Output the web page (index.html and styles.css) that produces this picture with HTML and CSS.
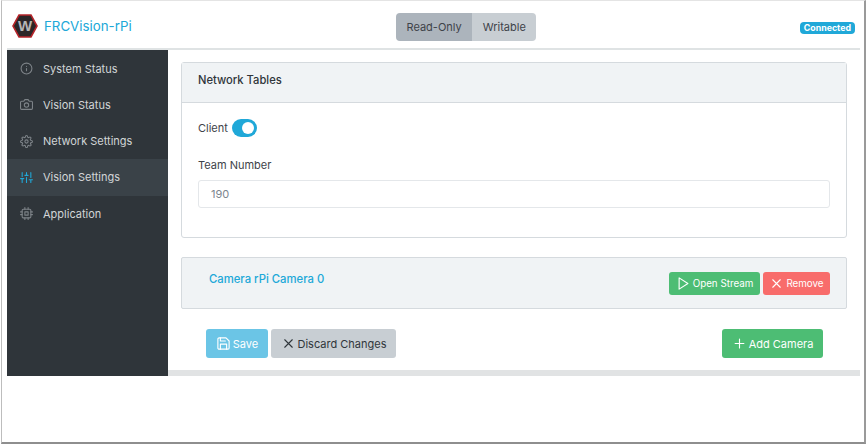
FILE: index.html
```html
<!DOCTYPE html>
<html lang="en">
<head>
<meta charset="utf-8">
<title>FRCVision-rPi</title>
<link rel="stylesheet" href="styles.css">
</head>
<body>
<div class="window">
  <div class="app">
    <header class="topbar">
      <div class="brand">
        <svg class="logo" viewBox="0 0 26 24" width="26" height="24"><polygon points="7,1 19,1 25,12 19,23 7,23 1,12" fill="#2b2627" stroke="#b5242a" stroke-width="1.6"/><text x="13" y="17" text-anchor="middle" class="logo-w">W</text></svg>
        <span class="brand-name">FRCVision-rPi</span>
      </div>
      <div class="toggle-group">
        <span class="toggle active">Read-Only</span><span class="toggle">Writable</span>
      </div>
      <span class="badge">Connected</span>
    </header>
    <div class="layout">
      <nav class="sidebar">
        <a class="nav-item"><svg class="nav-icon" viewBox="0 0 24 24"><circle cx="12" cy="12" r="10"/><path d="M12 16v-4M12 8h.01"/></svg>System Status</a>
        <a class="nav-item"><svg class="nav-icon" viewBox="0 0 24 24"><path d="M23 19a2 2 0 0 1-2 2H3a2 2 0 0 1-2-2V8a2 2 0 0 1 2-2h4l2-3h6l2 3h4a2 2 0 0 1 2 2z"/><circle cx="12" cy="13" r="4"/></svg>Vision Status</a>
        <a class="nav-item"><svg class="nav-icon" viewBox="0 0 24 24"><circle cx="12" cy="12" r="3"/><path d="M19.4 15a1.65 1.65 0 0 0 .33 1.82l.06.06a2 2 0 1 1-2.83 2.83l-.06-.06a1.65 1.65 0 0 0-2.82 1.17V21a2 2 0 1 1-4 0v-.09A1.65 1.65 0 0 0 7.2 19.7l-.06.06a2 2 0 1 1-2.83-2.83l.06-.06A1.65 1.65 0 0 0 3.2 14H3a2 2 0 1 1 0-4h.09A1.65 1.65 0 0 0 4.3 7.2l-.06-.06a2 2 0 1 1 2.83-2.83l.06.06A1.65 1.65 0 0 0 10 3.2V3a2 2 0 1 1 4 0v.09a1.65 1.65 0 0 0 2.8 1.21l.06-.06a2 2 0 1 1 2.83 2.83l-.06.06A1.65 1.65 0 0 0 20.8 10H21a2 2 0 1 1 0 4h-.09a1.65 1.65 0 0 0-1.51 1z"/></svg>Network Settings</a>
        <a class="nav-item current"><svg class="nav-icon" viewBox="0 0 24 24"><path d="M4 21v-7M4 10V3M12 21v-9M12 8V3M20 21v-5M20 12V3M1 14h6M9 8h6M17 16h6"/></svg>Vision Settings</a>
        <a class="nav-item"><svg class="nav-icon" viewBox="0 0 24 24"><rect x="4" y="4" width="16" height="16" rx="2"/><rect x="9" y="9" width="6" height="6"/><path d="M9 1v3M15 1v3M9 20v3M15 20v3M20 9h3M20 14h3M1 9h3M1 14h3"/></svg>Application</a>
      </nav>
      <main class="content">
        <section class="card">
          <h2 class="card-header">Network Tables</h2>
          <div class="card-body">
            <div class="switch-row">
              <span>Client</span>
              <span class="switch"><span class="knob"></span></span>
            </div>
            <label class="field-label">Team Number</label>
            <div class="input">190</div>
          </div>
        </section>
        <section class="camera">
          <a class="camera-title">Camera rPi Camera 0</a>
          <div class="camera-actions">
            <button class="btn small green"><svg class="btn-icon" viewBox="0 0 24 24"><path d="M5 3l14 9-14 9z"/></svg>Open Stream</button>
            <button class="btn small red"><svg class="btn-icon" viewBox="0 0 24 24"><path d="M18 6L6 18M6 6l12 12"/></svg>Remove</button>
          </div>
        </section>
        <div class="actions">
          <button class="btn blue"><svg class="btn-icon" viewBox="0 0 24 24"><path d="M19 21H5a2 2 0 0 1-2-2V5a2 2 0 0 1 2-2h11l5 5v11a2 2 0 0 1-2 2z"/><path d="M17 21v-8H7v8M7 3v5h8"/></svg>Save</button>
          <button class="btn gray"><svg class="btn-icon" viewBox="0 0 24 24"><path d="M18 6L6 18M6 6l12 12"/></svg>Discard Changes</button>
          <button class="btn green add"><svg class="btn-icon" viewBox="0 0 24 24"><path d="M12 5v14M5 12h14"/></svg>Add Camera</button>
        </div>
      </main>
    </div>
  </div>
</div>
</body>
</html>
```
FILE: styles.css
```css
* { box-sizing: border-box; }
html, body { margin: 0; padding: 0; height: 100%; background: #fff; }
body { font-family: Inter, "Liberation Sans", sans-serif; font-size: 11px; color: #3e4349; overflow: hidden; }
.window {
  width: 865px; height: 444px; margin-left: 1px;
  border: 1px solid #c9c9c9; border-bottom: 2px solid #8e8e8e; border-right: 2px solid #9a9a9a; border-left-color: #bdbdbd;
  padding: 0 4px 0 5px; border-top-color: #e4e4e4;
}
.app { width: 853px; }
.topbar {
  height: 49px; border-bottom: 2px solid #dfe3e4; display: flex; align-items: center; position: relative;
}
.brand { display: flex; align-items: center; gap: 6px; margin-left: 5px; margin-top: 3px; flex: 1; }
.logo { display: block; }
.logo-w { font: 700 15px "Liberation Sans", sans-serif; fill: #b4b4b4; }
.brand-name { color: #20a8d8; font-size: 13.3px; }
.toggle-group { display: flex; border-radius: 4px; overflow: hidden; position: absolute; left: 389px; top: 12px; }
.toggle { display: block; height: 28px; line-height: 28px; padding: 0 10.5px; background: #c8ced3; color: #3e4349; }
.toggle.active { background: #acb4bc; }
.badge { background: #20a8d8; color: #fff; font-size: 8.8px; font-weight: 700; line-height: 12px; height: 12px; padding: 0 4px; border-radius: 4px; margin-right: 5px; margin-top: 7px; }
.layout { display: flex; height: 326px; }
.sidebar { width: 161px; background: #2f353a; padding-top: 0.4px; flex: none; }
.nav-item { display: flex; align-items: center; height: 36.3px; padding-left: 13px; color: #d2d5d7; }
.nav-item.current { background: #3a4248; }
.nav-item.current .nav-icon { stroke: #20a8d8; }
.nav-icon { width: 13px; height: 13px; margin-right: 10px; fill: none; stroke: #7d8388; stroke-width: 2; stroke-linecap: round; stroke-linejoin: round; flex: none; }
.content { flex: 1; border-bottom: 6px solid #e1e3e4; padding: 12px 13px 0 13px; display: flex; flex-direction: column; }
.card { border: 1px solid #d5dade; border-radius: 3px; height: 176px; flex: none; }
.card-header { margin: 0; height: 40px; line-height: 35px; padding-left: 16px; background: #f0f3f5; border-bottom: 1px solid #d5dade; font-size: 11.2px; font-weight: 500; color: #2f353a; }
.card-body { padding: 15px 16px 0; }
.switch-row { display: flex; align-items: center; gap: 4px; height: 19px; }
.switch { width: 25px; height: 18px; border-radius: 9px; background: #20a8d8; position: relative; display: block; }
.knob { position: absolute; right: 3px; top: 3px; width: 12px; height: 12px; border-radius: 50%; background: #fff; }
.field-label { display: block; margin-top: 20px; line-height: 16px; }
.input { margin-top: 7px; height: 28px; border: 1px solid #e4e7ea; border-radius: 3px; padding-left: 12px; line-height: 26px; color: #7c868e; }
.camera { margin-top: 19px; height: 52px; background: #f0f3f5; border: 1px solid #d5dade; border-radius: 2px; display: flex; align-items: flex-start; justify-content: space-between; padding: 0 16px 0 27px; flex: none; }
.camera-title { color: #20a8d8; font-weight: 500; font-size: 11.3px; margin-top: 14px; }
.camera-actions { display: flex; gap: 3px; margin-top: 14px; }
.btn { display: flex; align-items: center; justify-content: center; border: 0; border-radius: 3px; font-family: inherit; font-size: 11px; height: 29px; padding: 0; color: #fff; }
.btn.small { font-size: 9.8px; height: 23px; }
.btn-icon { width: 15px; height: 15px; margin-right: 2px; fill: none; stroke: currentColor; stroke-width: 1.8; stroke-linecap: round; stroke-linejoin: round; }
.green { background: #4dbd74; }
.red { background: #f86c6b; }
.blue { background: #6bc5e6; }
.gray { background: #c8ced3; color: #30363b; }
.camera-actions .green { width: 91px; }
.camera-actions .red { width: 67px; }
.actions { display: flex; gap: 3px; margin-top: 20px; padding: 0 24px 0 25px; }
.actions .blue { width: 62px; }
.actions .gray { width: 125px; }
.actions .add { width: 101px; margin-left: auto; }
```
